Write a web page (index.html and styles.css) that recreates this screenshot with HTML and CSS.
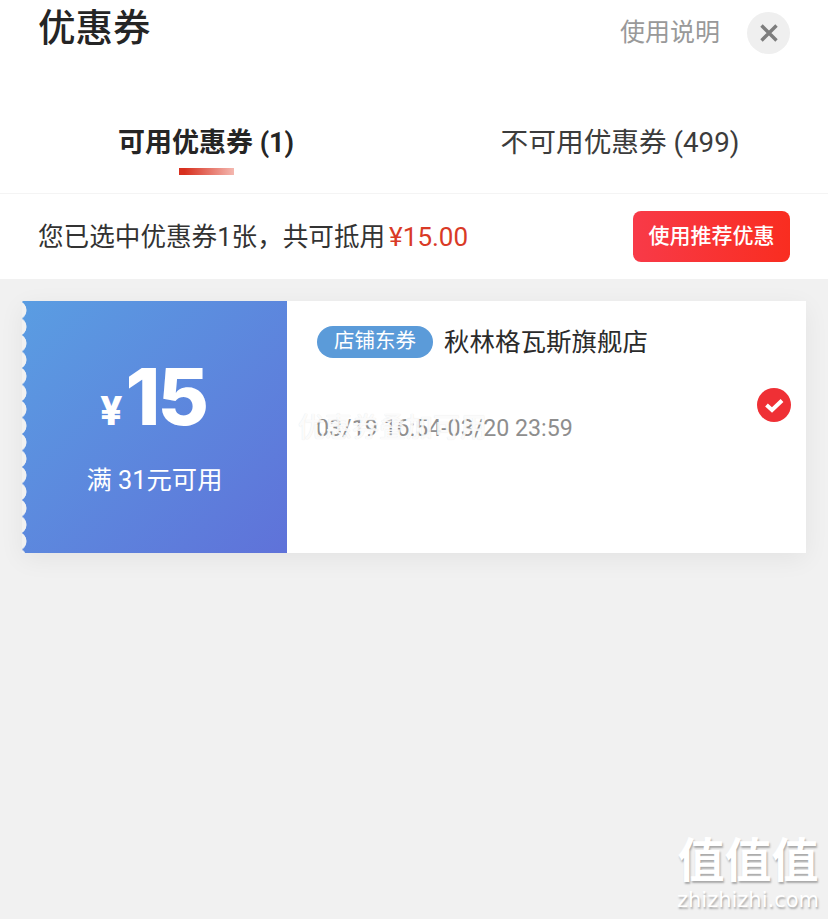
FILE: index.html
```html
<!DOCTYPE html>
<html>
	<head>
		<meta charset="UTF-8">
		<title>优惠券</title>
		<link rel="stylesheet" href="styles.css">
	</head>
	<body>
		<div class="panel">
			<header class="head">
				<h1>优惠券</h1>
				<div class="headRight">
					<a href="#" class="help">使用说明</a>
					<button class="close" aria-label="关闭">
						<svg width="20" height="20" viewBox="0 0 20 20"><path d="M2.5 2.5 17.5 17.5M17.5 2.5 2.5 17.5" stroke="#7d7d7d" stroke-width="3.4" fill="none"/></svg>
					</button>
				</div>
			</header>

			<ul class="tabs">
				<li class="active">可用优惠券 (1)</li>
				<li>不可用优惠券 (499)</li>
			</ul>

			<div class="summary">
				<p>您已选中优惠券1张，共可抵用<span class="amount">¥15.00</span></p>
				<a href="#" class="button">使用推荐优惠</a>
			</div>
		</div>

		<main class="list">
			<div class="coupon">
				<div class="value">
					<div class="price"><span class="yen">¥</span>15</div>
					<div class="rule">满 31元可用</div>
				</div>
				<div class="info">
					<div class="shop">
						<span class="tag">店铺东券</span>
						<span class="shopName">秋林格瓦斯旗舰店</span>
					</div>
					<div class="date">03/19 16:54-03/20 23:59<span class="ghost">优惠券叠加可用</span></div>
					<svg class="check" width="34" height="34" viewBox="0 0 34 34">
						<circle cx="17" cy="17" r="17" fill="#ef3035"/>
						<path d="M9.5 17 15 22 25 12.5" stroke="#fff" stroke-width="4" fill="none"/>
					</svg>
				</div>
			</div>
		</main>

		<div class="watermark">
			<div class="wmMark">值值值</div>
			<div class="wmUrl">zhizhizhi.com</div>
		</div>
	</body>
</html>
```

FILE: styles.css
```css
html {
	box-sizing: border-box;
	font-family: Roboto, "Noto Sans CJK SC", sans-serif;
}
*, *:before, *:after {
	box-sizing: inherit;
}

body {
	margin: 0;
	min-height: 919px;
	background: #f1f1f1;
	display: flex;
	flex-direction: column;
	position: relative;
	overflow: hidden;
}

.panel {
	background: #fff;
}

/* 标题栏 */
.head {
	display: flex;
	justify-content: space-between;
	align-items: flex-start;
	padding: 6px 38px 0 39px;
	height: 106px;
}

h1 {
	margin: 0 0 0 -1px;
	font-size: 37.5px;
	line-height: 44px;
	font-weight: 500;
	color: #252525;
}

.headRight {
	display: flex;
	align-items: center;
	gap: 27px;
	margin-top: 6px;
}

.help {
	margin-bottom: 6px;
	font-size: 25px;
	color: #999;
	text-decoration: none;
}

.close {
	width: 43px;
	height: 42px;
	padding: 0;
	border: 0;
	border-radius: 50%;
	background: #efefef;
	display: flex;
	align-items: center;
	justify-content: center;
}

/* 选项卡 */
.tabs {
	margin: 0;
	padding: 0;
	list-style: none;
	display: flex;
	height: 88px;
	border-bottom: 1px solid #f4f4f4;
}

.tabs li {
	position: relative;
	text-align: center;
	font-size: 27.7px;
	line-height: 74px;
	color: #3c3c3c;
}

.tabs li:first-child {
	flex: 0 0 412px;
}

.tabs li:last-child {
	flex: 0 0 416px;
}

.tabs .active {
	font-size: 27px;
	font-weight: 700;
	color: #252525;
}

.tabs .active:after {
	content: "";
	position: absolute;
	left: 179px;
	top: 62px;
	width: 55px;
	height: 7px;
	background: linear-gradient(90deg, #d8301f 10%, #f4b8b0);
}

/* 已选提示 */
.summary {
	display: flex;
	justify-content: space-between;
	align-items: center;
	height: 85px;
	padding: 0 38px 0 39px;
}

.summary p {
	margin: -4px 0 0 -1px;
	font-size: 25.6px;
	color: #333;
}

.amount {
	margin-left: 4px;
	font-size: 26px;
	color: #d93a26;
}

.button {
	width: 157px;
	height: 51px;
	border-radius: 8px;
	background: linear-gradient(90deg, #f83a48, #f92d20);
	color: #fff;
	font-size: 21px;
	font-weight: 500;
	line-height: 51px;
	text-align: center;
	text-decoration: none;
}

/* 优惠券列表 */
.list {
	padding: 22px 22px 0;
}

.coupon {
	display: flex;
	height: 252px;
	background: #fff;
	box-shadow: 0 6px 24px rgba(0, 0, 0, .06);
}

.value {
	position: relative;
	flex: 0 0 265px;
	display: flex;
	flex-direction: column;
	align-items: center;
	background: linear-gradient(135deg, #5a9de2, #5f72d9);
	color: #fff;
}

/* 左侧锯齿边 */
.value:before {
	content: "";
	position: absolute;
	left: 0;
	top: 0;
	bottom: 0;
	width: 5px;
	background: radial-gradient(circle at -5px 50%, #f1f1f1 9.2px, rgba(241, 241, 241, 0) 9.8px) 0 1px / 5px 16.5px repeat-y;
}

.price {
	margin-top: 48px;
	margin-left: -3px;
	font-size: 79px;
	line-height: 94px;
	font-weight: 800;
	font-family: Inter, Roboto, sans-serif;
	letter-spacing: -3px;
}

.yen {
	font-size: 39px;
	margin-right: 3px;
	letter-spacing: 0;
}

.rule {
	margin-top: 7px;
	font-size: 25.3px;
	line-height: 32px;
}

.info {
	position: relative;
	flex: 1;
	padding: 24px 0 0 30px;
}

.shop {
	display: flex;
	align-items: center;
	gap: 11px;
}

.tag {
	width: 116px;
	height: 32px;
	border-radius: 16px;
	background: #5b9bd9;
	color: #fff;
	font-size: 20.5px;
	line-height: 31px;
	text-align: center;
}

.shopName {
	margin-top: -4px;
	font-size: 25.5px;
	color: #2b2b2b;
}

.date {
	position: relative;
	margin-top: 54px;
	margin-left: -1px;
	font-size: 23.2px;
	line-height: 32px;
	color: #8e8e8e;
}

/* 叠在日期上的白色残影 */
.ghost {
	position: absolute;
	left: -18px;
	top: 0;
	font-size: 27px;
	font-weight: 500;
	color: rgba(255, 255, 255, .9);
	text-shadow: 0 0 1px rgba(0, 0, 0, .12);
	white-space: nowrap;
}

.check {
	position: absolute;
	right: 15px;
	top: 87px;
}

/* 水印 */
.watermark {
	position: absolute;
	right: 9px;
	bottom: 7px;
	width: 142px;
	text-align: center;
	color: #fff;
	text-shadow: 1px 2px 2px rgba(0, 0, 0, .3);
}

.wmMark {
	font-size: 47px;
	line-height: 54px;
	font-weight: 700;
	white-space: nowrap;
}

.wmUrl {
	font-family: "DejaVu Sans", sans-serif;
	font-size: 21px;
	line-height: 24px;
	white-space: nowrap;
}
```
